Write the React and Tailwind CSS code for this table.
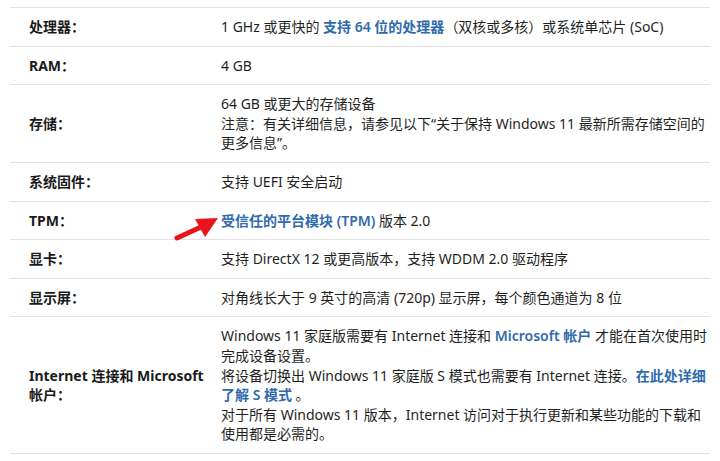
import React from "react";

const font = { fontFamily: '"Noto Sans", "Open Sans", "Noto Sans CJK SC", sans-serif' };

function Link({ children }) {
  return <span className="font-semibold text-[#2f6aad]">{children}</span>;
}

const rows = [
  {
    label: "处理器：",
    value: [
      <>
        1 GHz 或更快的 <Link>支持 64 位的处理器</Link>（双核或多核）或系统单芯片 (SoC)
      </>,
    ],
  },
  { label: "RAM：", value: ["4 GB"] },
  {
    label: "存储：",
    value: [
      "64 GB 或更大的存储设备",
      "注意：有关详细信息，请参见以下“关于保持 Windows 11 最新所需存储空间的",
      "更多信息”。",
    ],
  },
  { label: "系统固件：", value: ["支持 UEFI 安全启动"] },
  {
    label: "TPM：",
    value: [
      <>
        <Link>受信任的平台模块 (TPM)</Link> 版本 2.0
      </>,
    ],
  },
  { label: "显卡：", value: ["支持 DirectX 12 或更高版本，支持 WDDM 2.0 驱动程序"] },
  { label: "显示屏：", value: ["对角线长大于 9 英寸的高清 (720p) 显示屏，每个颜色通道为 8 位"] },
  {
    label: (
      <>
        Internet 连接和 Microsoft
        <br />
        帐户：
      </>
    ),
    value: [
      <>
        Windows 11 家庭版需要有 Internet 连接和 <Link>Microsoft 帐户</Link> 才能在首次使用时
      </>,
      "完成设备设置。",
      <>
        将设备切换出 Windows 11 家庭版 S 模式也需要有 Internet 连接。<Link>在此处详细</Link>
      </>,
      <>
        <Link>了解 S 模式</Link> 。
      </>,
      "对于所有 Windows 11 版本，Internet 访问对于执行更新和某些功能的下载和",
      "使用都是必需的。",
    ],
  },
];

function Arrow() {
  return (
    <svg className="absolute left-[170px] top-[213px]" width="52" height="30" viewBox="0 0 52 30">
      <line x1="7" y1="25" x2="31" y2="14" stroke="#e8141b" strokeWidth="5" strokeLinecap="round" />
      <polygon points="48,5 25,6 35,24" fill="#e8141b" />
    </svg>
  );
}

export default function App() {
  return (
    <div className="relative w-[720px] h-[461px] bg-white overflow-hidden text-[14px] text-[#1f1f1f]" style={font}>
      <div className="ml-[10px] mt-[7px] w-[700px] border-b border-[#e3e3e3]">
        {rows.map((r, i) => (
          <div key={i} className="grid grid-cols-[211px_1fr] border-t border-[#e3e3e3] py-[9px] leading-[19.6px]">
            <div className="pl-[19px] font-bold text-[#1a1a1a] self-center">{r.label}</div>
            <div className="self-center">
              {r.value.map((v, j) => (
                <div key={j} className="whitespace-nowrap">{v}</div>
              ))}
            </div>
          </div>
        ))}
      </div>
      <Arrow />
    </div>
  );
}
